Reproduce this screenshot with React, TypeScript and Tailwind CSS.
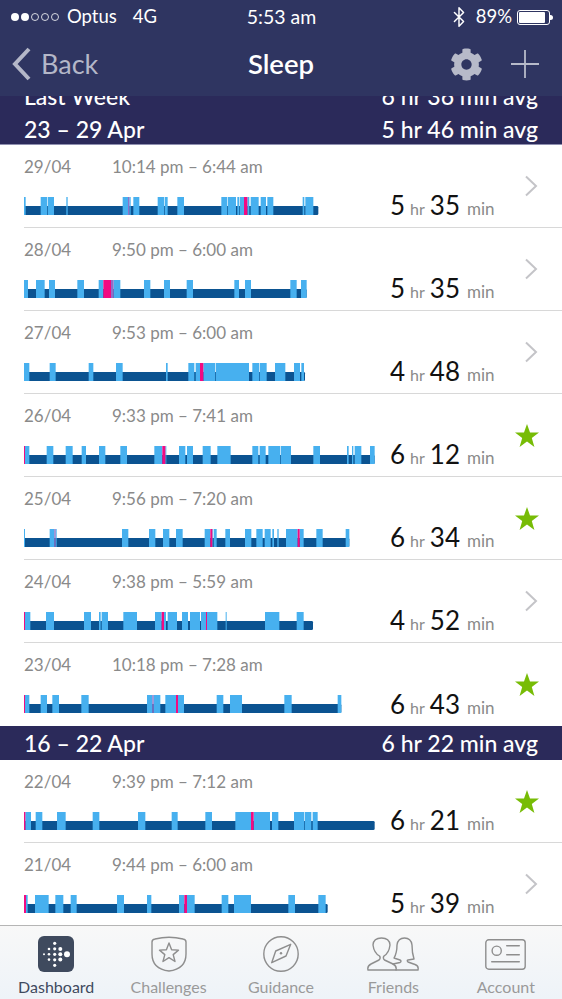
import { Bluetooth } from 'lucide-react'
import { FaCog } from 'react-icons/fa'

/* ---------- data ---------- */

type Seg = [number, number]

interface Night {
  date: string
  time: string
  hr: number
  min: number
  star?: boolean
  end: number
  awake: Seg[]
  pink?: Seg[]
  purple?: Seg[]
}

const week1: Night[] = [
  {
    date: '29/04', time: '10:14 pm – 6:44 am', hr: 5, min: 35, end: 955,
    awake: [[72,77],[122,142],[144,162],[199,203],[368,384],[388,392],[400,418],[473,492],[494,503],[532,552],[664,682],[684,708],[712,718],[720,732],[742,748],[752,776],[782,798],[802,820],[908,913],[916,940]],
    pink: [[732,742]],
    purple: [[384,388]],
  },
  {
    date: '28/04', time: '9:50 pm – 6:00 am', hr: 5, min: 35, end: 920,
    awake: [[72,84],[108,134],[147,165],[232,252],[296,310],[341,361],[432,451],[492,510],[560,579],[703,717],[735,753],[871,890],[903,920]],
    pink: [[310,333]],
    purple: [[333,341]],
  },
  {
    date: '27/04', time: '9:53 pm – 6:00 am', hr: 4, min: 48, end: 915,
    awake: [[72,88],[149,167],[266,280],[348,368],[498,503],[565,583],[587,600],[610,645],[647,747],[757,777],[779,800],[825,856],[882,900],[904,912]],
    pink: [[600,610]],
  },
  {
    date: '26/04', time: '9:33 pm – 7:41 am', hr: 6, min: 12, star: true, end: 1124,
    awake: [[75,88],[140,160],[197,218],[245,258],[297,316],[361,381],[463,487],[496,499],[537,556],[561,579],[608,632],[652,692],[757,775],[779,797],[805,840],[842,873],[940,960],[1041,1046],[1056,1060],[1064,1084],[1110,1124]],
    pink: [[72,75],[487,496]],
  },
  {
    date: '25/04', time: '9:56 pm – 7:20 am', hr: 6, min: 34, star: true, end: 1048,
    awake: [[72,75],[149,163],[167,170],[366,385],[447,466],[489,508],[528,548],[614,631],[637,640],[642,650],[676,690],[735,754],[769,788],[794,812],[817,822],[832,836],[858,893],[899,911],[949,968],[1037,1048]],
    pink: [[631,637],[893,899]],
    purple: [[163,167]],
  },
  {
    date: '24/04', time: '9:38 pm – 5:59 am', hr: 4, min: 52, end: 939,
    awake: [[75,91],[138,162],[252,273],[297,302],[305,324],[370,411],[465,485],[492,498],[503,531],[546,564],[570,600],[603,618],[621,652],[677,680],[795,838],[890,911]],
    pink: [[72,75],[485,492],[618,621]],
  },
  {
    date: '23/04', time: '10:18 pm – 7:28 am', hr: 6, min: 43, star: true, end: 1024,
    awake: [[75,88],[122,141],[157,177],[244,266],[441,457],[461,481],[496,528],[534,552],[650,670],[690,726],[853,875],[1013,1024]],
    pink: [[72,75],[528,534]],
    purple: [[457,461]],
  },
]

const week2: Night[] = [
  {
    date: '22/04', time: '9:39 pm – 7:12 am', hr: 6, min: 21, star: true, end: 1124,
    awake: [[76,93],[107,127],[171,197],[278,298],[414,436],[515,533],[616,636],[706,753],[761,810],[816,835],[882,912],[914,934],[938,953]],
    pink: [[72,76],[753,761]],
  },
  {
    date: '21/04', time: '9:44 pm – 6:00 am', hr: 5, min: 39, end: 983,
    awake: [[78,83],[105,146],[166,190],[212,230],[351,372],[441,454],[537,553],[561,584],[665,685],[702,753],[865,885],[955,977]],
    pink: [[72,78],[553,561]],
  },
]

/* ---------- small drawings ---------- */

// x values are in 3x pixels of the page, so 72 is the left edge of the row
function SleepBar({ night }: { night: Night }) {
  return (
    <svg width="366" height="18" viewBox="72 0 1098 54" className="block">
      <rect x="72" y="27" width={night.end - 72} height="27" rx="4" fill="#0b5391" />
      {night.awake.map(([a, b]) => (
        <rect key={a} x={a} y="0" width={b - a} height="54" fill="#47b0ef" />
      ))}
      {night.purple?.map(([a, b]) => (
        <rect key={a} x={a} y="0" width={b - a} height="54" fill="#8c72c9" />
      ))}
      {night.pink?.map(([a, b]) => (
        <rect key={a} x={a} y="0" width={b - a} height="54" fill="#f20a82" />
      ))}
    </svg>
  )
}

function Star() {
  return (
    <svg width="24" height="23" viewBox="0 0 24 23" className="block">
      <polygon points="12,0 15,8.6 24,8.6 16.8,14 19.4,23 12,17.6 4.6,23 7.2,14 0,8.6 9,8.6" fill="#77bc06" />
    </svg>
  )
}

function Chevron() {
  return (
    <svg width="14" height="22" viewBox="0 0 14 22" className="block ml-2">
      <polyline points="2,1.5 12,11 2,20.5" fill="none" stroke="#c4c4c8" strokeWidth="2" />
    </svg>
  )
}

function SignalDots() {
  return (
    <svg width="51" height="10" viewBox="0 0 51 10" className="block">
      {[0, 1, 2, 3, 4].map(i => (
        <circle
          key={i}
          cx={5 + i * 10}
          cy="5"
          r={i < 2 ? 4 : 3.5}
          fill={i < 2 ? '#fff' : 'none'}
          stroke="#fff"
          strokeWidth={i < 2 ? 0 : 0.8}
        />
      ))}
    </svg>
  )
}

function FitbitIcon() {
  const cols: [number, number[], number][] = [
    [6, [18.3], 1],
    [11, [13, 18.3, 23.6], 1.3],
    [16.7, [7.3, 12.8, 18.3, 23.8, 29.3], 1.6],
    [22.3, [13, 18.3, 23.6], 2],
    [29, [18.3], 3],
  ]
  return (
    <svg width="36" height="36" viewBox="0 0 36 36" className="block">
      <rect x="0" y="0" width="36" height="36" rx="6" fill="#3f4a5e" />
      {cols.map(([x, ys, r]) =>
        ys.map(y => <circle key={`${x}-${y}`} cx={x} cy={y} r={r} fill="#fff" />)
      )}
    </svg>
  )
}

const stroke = { fill: 'none', stroke: '#8e8e8e', strokeWidth: 1.4, strokeLinejoin: 'round', strokeLinecap: 'round' } as const

function ShieldIcon() {
  return (
    <svg width="36" height="36" viewBox="0 0 36 36" className="block">
      <path d="M1 6 Q1 3.5 4 3 Q18 -0.5 32 3 Q35 3.5 35 6 L35 18 Q35 33 18 35 Q1 33 1 18 Z" {...stroke} />
      <polygon points="18,7 20.6,13.8 27.5,14.1 22.2,18.6 24,25.5 18,21.6 12,25.5 13.8,18.6 8.5,14.1 15.4,13.8" {...stroke} />
    </svg>
  )
}

function CompassIcon() {
  return (
    <svg width="36" height="36" viewBox="0 0 36 36" className="block">
      <circle cx="18" cy="18" r="17.2" {...stroke} />
      <path d="M27.7 8.3 L23 20 L8.7 26.7 L12.7 15 Z" {...stroke} />
      <circle cx="18" cy="17.3" r="1.2" fill="#8e8e8e" />
    </svg>
  )
}

function FriendsIcon() {
  return (
    <svg width="52" height="34" viewBox="0 0 52 34" className="block">
      <path d="M1 33 Q0 29 4 27 L12 23 Q14 21 12.5 19 Q7 16 6 8 Q6.5 1 14.5 1 Q22.5 1 23 8 Q22 16 17 19 Q15.5 21 17.5 23 L26 27 Q30 29 29 33 Z" {...stroke} />
      <path d="M29 33 H51 Q52 29 48 27.5 L41 25 Q39.5 23.5 41 23 L47 22 Q45 16 45 8 Q44 1 37.5 1 Q31 1 30 8 Q30 16 27 21 L33 23 Q35 24 33 25.5 L26 27" {...stroke} />
    </svg>
  )
}

function CardIcon() {
  return (
    <svg width="41" height="31" viewBox="0 0 41 31" className="block">
      <rect x="0.8" y="0.8" width="39.4" height="29.4" rx="3" {...stroke} />
      <circle cx="11.7" cy="11.7" r="4.6" {...stroke} />
      <path d="M21.7 6.7 H34.3 M21.7 15.7 H34.3 M6.7 22.7 H34.3" {...stroke} />
    </svg>
  )
}

/* ---------- rows ---------- */

function NightRow({ night, last }: { night: Night; last?: boolean }) {
  return (
    <div className={`ml-6 h-[83px] shrink-0 flex ${last ? '' : 'border-b border-[#d8d8d8]'}`}>
      <div className="w-[366px] shrink-0">
        <div className="pt-[10px] flex text-[17px] leading-6 text-[#8a8a8a]">
          <span className="w-[88px]">{night.date}</span>
          <span>{night.time}</span>
        </div>
        <div className="mt-[18px]">
          <SleepBar night={night} />
        </div>
      </div>
      <div className="w-[116px] shrink-0 flex items-end pb-[2px]">
        <div className="flex items-baseline leading-8 whitespace-nowrap">
          <span className="text-[26px] text-[#111]">{night.hr}</span>
          <span className="text-[16px] text-[#8a8a8a] ml-[5px]">hr</span>
          <span className="text-[26px] text-[#111] ml-[5px]">{night.min}</span>
          <span className="text-[17px] text-[#8a8a8a] ml-[7px]">min</span>
        </div>
      </div>
      <div className="w-[42px] shrink-0 flex items-center justify-center">
        {night.star ? <Star /> : <Chevron />}
      </div>
    </div>
  )
}

function WeekHeader({ label, avg }: { label: string; avg: string }) {
  return (
    <div className="h-[34px] shrink-0 px-6 flex items-center justify-between text-[23px] font-medium text-white bg-[#2b2a5a]">
      <span>{label}</span>
      <span>{avg}</span>
    </div>
  )
}

const tabs = [
  { label: 'Dashboard', icon: <FitbitIcon />, active: true },
  { label: 'Challenges', icon: <ShieldIcon /> },
  { label: 'Guidance', icon: <CompassIcon /> },
  { label: 'Friends', icon: <FriendsIcon /> },
  { label: 'Account', icon: <CardIcon /> },
]

/* ---------- page ---------- */

export default function App() {
  return (
    <div className="w-[562px] h-[999px] overflow-hidden flex flex-col bg-white font-['Lato',sans-serif]">
      {/* status + nav */}
      <div className="h-[96px] shrink-0 bg-[#2f3561] text-white">
        <div className="h-[34px] flex items-center justify-between pl-[10px] pr-[9px] text-[18.5px]">
          <div className="flex items-center w-[190px]">
            <SignalDots />
            <span className="ml-[6px]">Optus</span>
            <span className="ml-[16px]">4G</span>
          </div>
          <span className="text-[19.5px]">5:53 am</span>
          <div className="flex items-center justify-end w-[190px]">
            <Bluetooth size={22} strokeWidth={1.6} />
            <span className="ml-[6px]">89%</span>
            <div className="ml-[5px] w-[33px] h-[15px] border border-white rounded-[3px] p-[1px]">
              <div className="h-full w-[88%] bg-white rounded-[1px]" />
            </div>
            <div className="w-[3px] h-[5px] bg-white rounded-r-sm" />
          </div>
        </div>
        <div className="h-[62px] flex items-center pb-[2px] relative">
          <svg width="20" height="34" viewBox="0 0 20 34" className="ml-[12px] shrink-0">
            <polyline points="17,2 3,17 17,32" fill="none" stroke="#b4b7c8" strokeWidth="4" />
          </svg>
          <span className="ml-[9px] text-[27px] text-[#b4b7c8]">Back</span>
          <span className="absolute left-0 right-0 text-center text-[27.5px] font-semibold text-white">Sleep</span>
          <FaCog size={33} color="#b7bac9" className="ml-auto" />
          <svg width="28" height="28" viewBox="0 0 28 28" className="ml-[28px] mr-[23px]">
            <path d="M14 0 V28 M0 14 H28" stroke="#b7bac9" strokeWidth="1.8" />
          </svg>
        </div>
      </div>

      {/* sticky week header, previous one sliding out behind the nav */}
      <div className="h-[49px] shrink-0 overflow-hidden flex flex-col justify-end bg-[#2b2a5a] border-b border-[#8f90b0]">
        <div className="h-[31px] shrink-0 px-6 flex items-center justify-between text-[23px] font-medium text-white">
          <span>Last Week</span>
          <span>6 hr 36 min avg</span>
        </div>
        <div className="-mb-[2px]">
          <WeekHeader label="23 – 29 Apr" avg="5 hr 46 min avg" />
        </div>
      </div>

      {/* list */}
      <div className="flex-1 min-h-0 overflow-hidden flex flex-col">
        {week1.map((n, i) => <NightRow key={n.date} night={n} last={i === week1.length - 1} />)}
        <WeekHeader label="16 – 22 Apr" avg="6 hr 22 min avg" />
        {week2.map(n => <NightRow key={n.date} night={n} />)}
      </div>

      {/* tab bar */}
      <div className="h-[74px] shrink-0 grid grid-cols-5 border-t border-[#b5b5b5] bg-gradient-to-b from-[#f8f8f8] to-[#eef3f8]">
        {tabs.map(t => (
          <div key={t.label} className="flex flex-col items-center pt-[10px]">
            <div className="h-[36px] flex items-center">{t.icon}</div>
            <span className={`mt-[5px] text-[16px] leading-5 ${t.active ? 'text-[#3f4a5e]' : 'text-[#9a9a9a]'}`}>{t.label}</span>
          </div>
        ))}
      </div>
    </div>
  )
}
